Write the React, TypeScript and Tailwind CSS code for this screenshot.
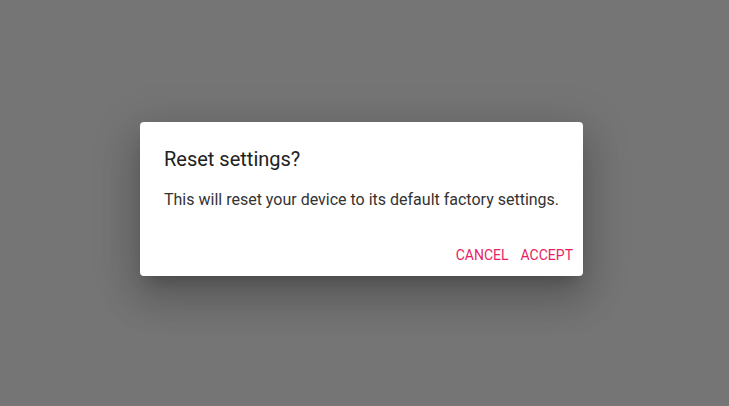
import React from 'react';

export default function App() {
  return (
    <div
      className="w-full h-[406px] bg-[#757575] flex items-center justify-center pr-[6px] pb-[8px]"
      style={{ fontFamily: 'Roboto, "Noto Sans", sans-serif' }}
    >
      <div className="w-[443px] h-[154px] bg-white rounded-[4px] shadow-[0_11px_15px_-7px_rgba(0,0,0,0.2),0_24px_38px_3px_rgba(0,0,0,0.14),0_9px_46px_8px_rgba(0,0,0,0.12)] flex flex-col">
        <h2 className="px-6 pt-[21px] text-[20px] leading-8 text-[#212121] font-normal">
          Reset settings?
        </h2>
        <p className="px-6 mt-[13px] text-[16px] leading-6 text-[#333333] whitespace-nowrap">
          This will reset your device to its default factory settings.
        </p>
        <div className="mt-auto flex justify-end items-center gap-3 pr-[10px] pt-[2px] h-[45px]">
          <button className="text-[14px] leading-4 text-[#e91e63] uppercase">
            Cancel
          </button>
          <button className="text-[14px] leading-4 text-[#e91e63] uppercase">
            Accept
          </button>
        </div>
      </div>
    </div>
  );
}
